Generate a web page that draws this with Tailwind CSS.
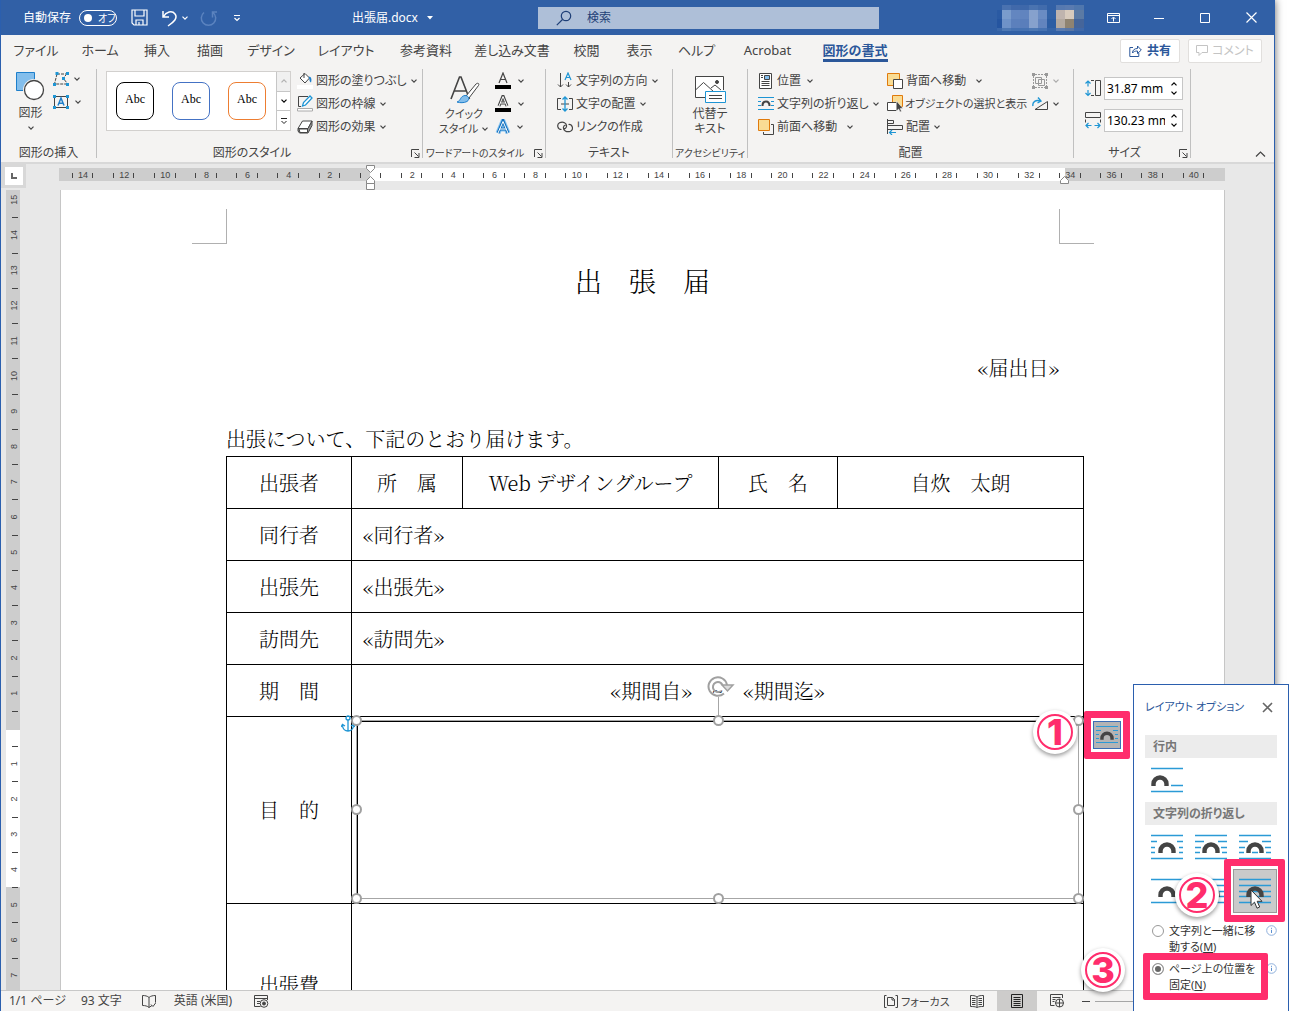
<!DOCTYPE html>
<html lang="ja">
<head>
<meta charset="utf-8">
<title>出張届.docx</title>
<script src="https://cdn.jsdelivr.net/npm/@tailwindcss/browser@4"></script>
</head>
<body class="relative h-screen overflow-hidden bg-white font-['Noto_Sans','Noto_Sans_CJK_JP',sans-serif] text-xs text-[#444] [font-feature-settings:'palt']">

<svg class="hidden">
  <symbol id="chev" viewBox="0 0 8 8"><path d="M1.5 2.7 4 5.2 6.5 2.7" fill="none" stroke="currentColor" stroke-width="1.2"/></symbol>
  <symbol id="launch" viewBox="0 0 9 9"><path d="M.5 8V.5H8M3.5 3.5l4 4M8 4v4.5H3.5" fill="none" stroke="currentColor"/></symbol>
  <symbol id="arch" viewBox="0 0 18 11"><path d="M2.5 11V9a6.5 6.5 0 0 1 13 0v2" fill="none" stroke="#444" stroke-width="4.4"/></symbol>
  <symbol id="info" viewBox="0 0 11 11"><circle cx="5.5" cy="5.5" r="4.8" fill="#fff" stroke="#8fb0dc"/><path d="M5.5 4.8V8M5.5 2.8v1" stroke="#5b8fd0"/></symbol>
</svg>

<div class="mr-[15px] flex h-full flex-col border-x border-[#2b5fae] bg-[#e8e8e8] shadow-[0_0_8px_rgba(0,0,0,0.6)]">

  <!-- Title bar -->
  <header class="flex h-[35px] shrink-0 items-center bg-[#3160a6] text-white">
    <div class="flex w-[350px] items-center pl-[22px]">
      <span class="w-[56px]">自動保存</span>
      <button class="flex h-4 w-[38px] items-center gap-[6px] rounded-full border border-white pl-[4px] text-[10px] leading-none whitespace-nowrap"><span class="size-2 shrink-0 rounded-full bg-white"></span>オフ</button>
      <button aria-label="保存" class="ml-[14px]"><svg width="17" height="17" viewBox="0 0 17 17" fill="none" stroke="#fff" stroke-width="1.2"><path d="M1 1h15v15H3l-2-2zM4 1v6h9V1M5 16v-5h7v5M8 16v-3"/></svg></button>
      <button aria-label="元に戻す" class="ml-[13px] flex items-center"><svg width="17" height="18" viewBox="0 0 17 18" fill="none" stroke="#fff" stroke-width="1.5"><path d="M2 2v6h6M2.500 7.500C5 3 11 1 14 5c3 4-1 8-7 12"/></svg><svg class="ml-[3px] size-2"><use href="#chev"/></svg></button>
      <button aria-label="やり直し" class="ml-[11px]"><svg width="17" height="18" viewBox="0 0 17 18" fill="none" stroke="#5b83bf" stroke-width="1.5"><path d="M4 3.500a7.200 7.200 0 1 0 9 0M12.500 8.500V3h4.500"/></svg></button>
      <button aria-label="カスタマイズ" class="ml-[16px]"><svg width="8" height="8" viewBox="0 0 8 8" fill="none" stroke="#fff" stroke-width="1.2"><path d="M1 1.500h6M1.500 4 4 6.500 6.500 4"/></svg></button>
    </div>
    <div class="flex w-[187px] items-center gap-[9px] pl-px"><span>出張届.docx</span><svg width="6" height="4"><path d="M0 0h6L3 3.500z" fill="#fff"/></svg></div>
    <label class="flex h-[22px] w-[341px] items-center bg-[#aebfd8] pl-[18px]">
      <svg width="17" height="16" viewBox="0 0 17 16" fill="none" stroke="#1f3f77" stroke-width="1.2"><circle cx="10" cy="6" r="4.700"/><path d="M6.500 9.500.8 15.200"/></svg>
      <input aria-label="検索" class="ml-[14px] w-[200px] bg-transparent text-xs outline-none placeholder:text-[#1f3f77]" placeholder="検索">
    </label>
    <div id="avatar" class="ml-auto grid h-[26px] grid-cols-[5px_repeat(8,9px)_10px] grid-rows-[5px_9px_9px_3px]"></div>
    <div class="ml-[23px] flex items-center pr-[17px]">
      <button aria-label="リボンの表示オプション"><svg width="13" height="10" viewBox="0 0 13 10" fill="none" stroke="#fff"><path d="M.5.500h12v9H.5zM.5 2.500h12M6.500 8.500V4.500M4.500 6l2-2 2 2"/></svg></button>
      <button aria-label="最小化" class="ml-[34px]"><svg width="11" height="10"><path d="M0 5.500h10" stroke="#fff"/></svg></button>
      <button aria-label="最大化" class="ml-[35px]"><svg width="11" height="10"><path d="M.5.500h9v9h-9z" fill="none" stroke="#fff"/></svg></button>
      <button aria-label="閉じる" class="ml-[35px]"><svg width="11" height="11"><path d="m.5.500 10 10m0-10-10 10" stroke="#fff" stroke-width="1.200"/></svg></button>
    </div>
  </header>

  <!-- Tabs -->
  <nav class="flex h-[31px] shrink-0 items-center bg-[#f4f3f2] pl-[3px] text-[13px]">
    <div class="grid grid-cols-[64px_64px_50px_56px_66px_84px_76px_96px_53px_53px_61px_81px_94px] text-center whitespace-nowrap">
      <a href="#">ファイル</a><a href="#">ホーム</a><a href="#">挿入</a><a href="#">描画</a><a href="#">デザイン</a><a href="#">レイアウト</a><a href="#">参考資料</a><a href="#">差し込み文書</a><a href="#">校閲</a><a href="#">表示</a><a href="#">ヘルプ</a><a href="#">Acrobat</a><a href="#" class="mx-auto w-[65px] shadow-[0_3px_0_#2b579a] font-bold text-[#2b579a]">図形の書式</a>
    </div>
    <div class="ml-auto flex gap-[8px] pr-[12px] text-xs">
      <button class="flex h-[24px] w-[60px] items-center justify-center gap-[5px] rounded-xs border border-[#e1dfdd] bg-white font-bold text-[#2b579a]"><svg width="13" height="12" viewBox="0 0 13 12" fill="none" stroke="#2b579a"><path d="M4 2.500H.8v9h9V8M3.500 8c0-3 2-4.500 5-4.500V1l3.800 4-3.800 3.500V6C6 6 4.500 6.500 3.500 8z"/></svg>共有</button>
      <button class="flex h-[24px] w-[74px] items-center justify-center gap-[4px] rounded-xs border border-[#e1dfdd] bg-white text-[#c4c4c4]"><svg width="12" height="12" viewBox="0 0 12 12" fill="none" stroke="#c4c4c4"><path d="M.5.500h11v7H6L3 10.500v-3H.5z"/></svg>コメント</button>
    </div>
  </nav>

  <!-- Ribbon -->
  <div class="flex h-[98px] shrink-0 border-b-2 border-[#d8d8d8] bg-[#f4f3f2] pt-[3px] pb-[4px] leading-4 whitespace-nowrap">
    <section class="flex w-[96px] flex-col border-r border-[#c0c0c0]">
      <div class="flex h-[76px] shrink-0 pl-[15px]">
        <button class="flex w-[29px] flex-col items-center justify-start"><svg class="mt-[3px] shrink-0" width="29" height="29" viewBox="0 0 29 29"><path d="M.5.500h18v18H.5z" fill="#83beec" stroke="#1e7fcb"/><circle cx="18" cy="18" r="11" fill="#f4f3f2"/><circle cx="18" cy="18" r="9.500" fill="#fff" stroke="#444" stroke-width="1.300"/></svg><span class="mt-[4px]">図形</span><svg class="mt-[3px] size-2"><use href="#chev"/></svg></button>
        <div class="ml-[8px] flex flex-col">
          <button aria-label="図形の編集" class="flex h-[20px] items-center gap-[3px]"><svg width="17" height="14" viewBox="0 0 17 14"><path d="M4 2h10M4 2 1.500 12H14M14 2l-4 4 4 5" fill="none" stroke="#444" stroke-dasharray="3 1"/><path d="M2.500 0h3v3h-3zM13 0h3v3h-3zM0 11h3v3H0zM13 11h3v3h-3zM9 5h3v3H9z" fill="#1e95d4"/></svg><svg class="size-2"><use href="#chev"/></svg></button>
          <button aria-label="テキスト ボックス" class="mt-[3px] flex h-[20px] items-center gap-[5px]"><svg width="16" height="14" viewBox="0 0 16 14"><path d="M1.500 1.500h13v11h-13z" fill="none" stroke="#444"/><path d="M0 0h3v3H0zM13 0h3v3h-3zM0 11h3v3H0zM13 11h3v3h-3z" fill="#1e95d4"/><path d="m5 10.500 3-7.500 3 7.500M6 8.300h4" fill="none" stroke="#1e7fcb" stroke-width="1.500"/></svg><svg class="size-2"><use href="#chev"/></svg></button>
        </div>
      </div>
      <div class="text-center">図形の挿入</div>
    </section>

    <section class="flex w-[326px] flex-col border-r border-[#c0c0c0]">
      <div class="flex h-[76px] shrink-0 pt-[2px] pl-[9px]">
        <div class="flex h-[60px] w-[185px] border border-[#d2d0ce] bg-white font-['Liberation_Serif',serif] text-xs text-black">
          <button class="mt-[10px] ml-[9px] h-[38px] w-[38px] rounded-lg border border-black pb-1">Abc</button>
          <button class="mt-[10px] ml-[18px] h-[38px] w-[38px] rounded-lg border border-[#4472c4] pb-1">Abc</button>
          <button class="mt-[10px] ml-[18px] h-[38px] w-[38px] rounded-lg border border-[#ed7d31] pb-1">Abc</button>
          <div class="ml-auto flex w-[14px] flex-col divide-y divide-[#c6c6c6] border-l border-[#c6c6c6]">
            <button aria-label="上へ" class="flex flex-1 items-center justify-center bg-[#f0f0f0] text-[#b0b0b0]"><svg class="size-2 rotate-180"><use href="#chev"/></svg></button>
            <button aria-label="下へ" class="flex flex-1 items-center justify-center"><svg class="size-2"><use href="#chev"/></svg></button>
            <button aria-label="その他" class="flex flex-1 items-center justify-center"><svg width="8" height="8" fill="none" stroke="#222"><path d="M1 1.500h6M1.500 4 4 6.500 6.500 4"/></svg></button>
          </div>
        </div>
        <div class="ml-[6px] -mt-[2px] flex flex-col">
          <button class="flex h-[23px] items-center gap-[3px]"><svg width="16" height="17" viewBox="0 0 16 17"><path d="M0 13h16v4H0z" fill="#fff"/><path d="m3 6 5-4.500L12.500 6 8 11zM7 1v5" fill="#fff" stroke="#444"/><path d="M11.500 4.500c3 0 3.500 3 2.500 6-2-1-1-3-2.500-6" fill="#1e7fcb"/></svg>図形の塗りつぶし<svg class="size-2"><use href="#chev"/></svg></button>
          <button class="flex h-[23px] items-center gap-[3px]"><svg width="16" height="17" viewBox="0 0 16 17"><path d="M11 1.500H1.500v10H4" fill="none" stroke="#444"/><path d="m5.500 11 1-3.500L13 1l2 2-6.500 7z" fill="#fff" stroke="#1e95d4" stroke-width="1.300"/><path d="M.5 13.500h15v2.500H.5z" fill="#fff" stroke="#aaa"/></svg>図形の枠線<svg class="size-2"><use href="#chev"/></svg></button>
          <button class="flex h-[23px] items-center gap-[3px]"><svg width="16" height="14" viewBox="0 0 16 14"><path d="M5.500 1h9.500l-4 7.500H1z" fill="#fff" stroke="#444"/><path d="M1 8.500h10L15 1v4.500L11 13H2.500L1 11z" fill="#999" stroke="#444"/><path d="M2 9h8.500v3.500H3z" fill="#fff" stroke="#444"/></svg>図形の効果<svg class="size-2"><use href="#chev"/></svg></button>
        </div>
      </div>
      <div class="flex items-center"><span class="flex-1 pr-[4px] text-center">図形のスタイル</span><button aria-label="詳細" class="mr-[2px]"><svg class="size-[9px]"><use href="#launch"/></svg></button></div>
    </section>

    <section class="flex w-[123px] flex-col border-r border-[#c0c0c0]">
      <div class="flex h-[76px] shrink-0 pl-[17px]">
        <button class="flex w-[48px] flex-col items-center justify-start leading-[15px]"><svg class="mt-[5px] shrink-0" width="31" height="30" viewBox="0 0 31 30"><path d="m2 25 8.500-22H12l8.500 22M5 17h12" fill="none" stroke="#444" stroke-width="1.600"/><path d="m17 22 10-12c2-1.500 3.500-.5 2.500 1.500L20 24z" fill="#fff" stroke="#444"/><path d="M8 28c4-1 3-6 8-6.500 4 0 5 4 2 6-3 1.500-7 1.500-10 .5" fill="#83beec" stroke="#1e7fcb"/></svg><span class="mt-[2px] text-[11px]">クイック</span><span class="flex items-center gap-[3px] text-[11px]">スタイル<svg class="size-2"><use href="#chev"/></svg></span></button>
        <div class="ml-[7px] flex flex-col">
          <button aria-label="文字の塗りつぶし" class="flex h-[23px] items-center gap-[6px]"><svg width="16" height="17" viewBox="0 0 16 17"><path d="m4 11 4-10 4 10M5.300 7.500h5.400" fill="none" stroke="#444" stroke-width="1.200"/><path d="M0 13h16v4H0z" fill="#000"/></svg><svg class="size-2"><use href="#chev"/></svg></button>
          <button aria-label="文字の輪郭" class="flex h-[23px] items-center gap-[6px]"><svg width="16" height="17" viewBox="0 0 16 17"><path d="m4 11 4-10 4 10M5.300 8h5.400" fill="none" stroke="#444" stroke-width="3"/><path d="m4 11 4-9.500 4 9.500M5.300 8h5.400" fill="none" stroke="#fff"/><path d="M0 13h16v4H0z" fill="#000"/></svg><svg class="size-2"><use href="#chev"/></svg></button>
          <button aria-label="文字の効果" class="flex h-[23px] items-center gap-[5px]"><svg width="16" height="16" viewBox="0 0 16 16"><path d="M3 14 8 2l5 12M4.500 10h7" fill="none" stroke="#8cc6f0" stroke-width="5"/><path d="M3 14 8 2l5 12M4.500 10h7" fill="none" stroke="#1472c0" stroke-width="3"/><path d="M3 14 8 2.500 13 14M4.500 10h7" fill="none" stroke="#fff"/></svg><svg class="size-2"><use href="#chev"/></svg></button>
        </div>
      </div>
      <div class="flex items-center"><span class="flex-1 pl-[3px] text-[10px]">ワードアートのスタイル</span><button aria-label="詳細" class="mr-[2px]"><svg class="size-[9px]"><use href="#launch"/></svg></button></div>
    </section>

    <section class="flex w-[127px] flex-col border-r border-[#c0c0c0]">
      <div class="flex h-[76px] shrink-0 flex-col items-start pl-[11px]">
        <button class="flex h-[23px] items-center gap-[3px]"><svg width="16" height="17" viewBox="0 0 16 17" fill="none" stroke="#444"><path d="M3.500 1v14M1 12.500 3.500 15 6 12.500M11.500 10v5M9 12.500l2.500 2.500 2.500-2.500"/><path d="m8 8 3-7 3 7M9 5.500h4" stroke="#1e95d4" stroke-width="1.200"/></svg>文字列の方向<svg class="size-2"><use href="#chev"/></svg></button>
        <button class="flex h-[23px] items-center gap-[3px]"><svg width="16" height="16" viewBox="0 0 16 16" fill="none" stroke="#444"><path d="M4 2.500H.5v11H4M12 2.500h3.500v11H12M4 8h8"/><path d="M8 1v14M5.500 3.500 8 1l2.500 2.500M5.500 12.500 8 15l2.500-2.500" stroke="#1e95d4" stroke-width="1.300"/></svg>文字の配置<svg class="size-2"><use href="#chev"/></svg></button>
        <button class="flex h-[23px] items-center gap-[3px]"><svg width="16" height="12" viewBox="0 0 16 12" fill="none" stroke="#444" stroke-width="1.200"><path d="M4.500 8.500C.5 8.500-.5 3.500 2.500 1.800 6 0 10 2 9.500 5.500 9.200 7 8 8 6.500 7.500M11.500 3.500c4-.5 5.500 5 2 6.700-4 1.500-7.500-1-7-4 .2-1.200 1-2 2.200-2.200"/></svg>リンクの作成</button>
      </div>
      <div class="text-center">テキスト</div>
    </section>

    <section class="flex w-[75px] flex-col border-r border-[#c0c0c0]">
      <button class="flex h-[76px] shrink-0 flex-col items-center justify-start leading-[15px]"><svg class="mt-[7px] shrink-0" width="31" height="28" viewBox="0 0 31 28" fill="none" stroke="#444"><path d="M28.500 14V.500H.5v21h10" fill="#fff"/><path d="m.5 14 8-7.500 10 9M16 12l4-3 6 5"/><circle cx="22" cy="6" r="1.500" fill="#444"/><path d="M10.500 15.500h20v11h-20z" fill="#fff" stroke="#1e95d4"/><path d="M14 19.500h13M14 22.500h13"/></svg><span class="mt-[2px]">代替テ</span><span>キスト</span></button>
      <div class="text-center text-[10px]">アクセシビリティ</div>
    </section>

    <section class="flex w-[326px] flex-col border-r border-[#c0c0c0]">
      <div class="flex h-[76px] shrink-0 pl-[10px]">
        <div class="flex w-[128px] flex-col items-start">
          <button class="flex h-[23px] items-center gap-[3px]"><svg width="16" height="16" viewBox="0 0 16 16" fill="#fff" stroke="#444"><path d="M1.500.500h12v15h-12z"/><path d="M3.500 8.500h8M3.500 10.500h8M3.500 12.500h8M3 2.500h2M3 4.500h2"/><path d="M6.500 2.500h5v4h-5z" fill="#83beec"/></svg>位置<svg class="ml-[2px] size-2"><use href="#chev"/></svg></button>
          <button class="flex h-[23px] items-center gap-[3px]"><svg width="16" height="13" viewBox="0 0 16 13" fill="none" stroke="#1e95d4"><path d="M0 .500h16M0 12.500h16M0 4.500h3M0 8.500h3M13 4.500h3M13 8.500h3"/><path d="M4.500 9c0-6 7-6 7 0" stroke="#444" stroke-width="2"/></svg>文字列の折り返し<svg class="size-2"><use href="#chev"/></svg></button>
          <button class="flex h-[23px] items-center gap-[3px]"><svg width="16" height="16" viewBox="0 0 16 16"><path d="M13 5.500h2.500v10h-10V13" fill="none" stroke="#444"/><path d="M.5.500h11v11H.5z" fill="#f9dc94" stroke="#e07a0c"/></svg>前面へ移動<svg class="ml-[6px] size-2"><use href="#chev"/></svg></button>
        </div>
        <div class="flex w-[146px] flex-col items-start pl-px">
          <button class="flex h-[23px] items-center gap-[3px]"><svg width="16" height="16" viewBox="0 0 16 16"><path d="M.5.500h12v12H.5z" fill="#f9dc94" stroke="#e07a0c"/><path d="M6.500 6.500h9v9h-9z" fill="#fff" stroke="#444"/></svg>背面へ移動<svg class="ml-[6px] size-2"><use href="#chev"/></svg></button>
          <button class="flex h-[23px] items-center gap-[2px] text-[11px]"><svg width="16" height="17" viewBox="0 0 16 17"><path d="M5.500.500h10v11h-10z" fill="#f9dc94" stroke="#e07a0c"/><path d="M.5 7.500h9v8h-9z" fill="#fff" stroke="#444"/><path d="M9.500 6v10l2.200-2 1.300 3 1.500-.7-1.300-2.800h2.800z" fill="#444" stroke="#fff" stroke-width=".5"/></svg>オブジェクトの選択と表示</button>
          <button class="flex h-[23px] items-center gap-[3px]"><svg width="16" height="16" viewBox="0 0 16 16" fill="none" stroke="#444"><path d="M.5 0v15M.5 1.500h6v3h-6M.5 6.500h15v4H.5z"/><path d="M9 13.500H2.500M5 11l-2.500 2.500L5 16" stroke="#1e95d4" stroke-width="1.200"/></svg>配置<svg class="size-2"><use href="#chev"/></svg></button>
        </div>
        <div class="flex flex-col">
          <button aria-label="グループ化" class="flex h-[23px] items-center gap-[4px] text-[#aaa]"><svg width="16" height="16" viewBox="0 0 16 16" fill="none" stroke="#999"><path d="M3 1.500h10M3 14.500h10M1.500 3v10M14.500 3v10" stroke-dasharray="2 1"/><path d="M3.500 4.500h6v6h-6zM6.500 6.500h6v6h-6z"/><path d="M0 0h3v3H0zM13 0h3v3h-3zM0 13h3v3H0zM13 13h3v3h-3z" fill="#999" stroke="none"/></svg><svg class="size-2"><use href="#chev"/></svg></button>
          <button aria-label="回転" class="flex h-[23px] items-center gap-[4px]"><svg width="16" height="14" viewBox="0 0 16 14" fill="none" stroke="#444"><path d="M15.500 4.500v8H3z"/><path d="M1 9c-1-4 3-6.500 7-5M6 .500 9 4 5.500 6" stroke="#1e95d4" stroke-width="1.400"/></svg><svg class="size-2"><use href="#chev"/></svg></button>
        </div>
      </div>
      <div class="text-center">配置</div>
    </section>

    <section class="flex w-[117px] flex-col border-r border-[#c0c0c0]">
      <div class="flex h-[76px] shrink-0 flex-col gap-[9px] pt-[8px] pl-[11px] text-black">
        <label class="flex h-[23px] items-center gap-[3px]"><svg width="16" height="17" viewBox="0 0 16 17" fill="none" stroke="#444"><path d="M10.500.500h5v15h-5zM6 .500h3M6 15.500h3"/><path d="M3 1v5.500M.5 3.500 3 1l2.500 2.500M3 10v5.500M.5 13 3 15.500 5.500 13" stroke="#1e95d4" stroke-width="1.200"/></svg>
          <span class="flex h-[23px] w-[79px] border border-[#c6c6c6] bg-white"><input aria-label="高さ" value="31.87 mm" class="w-[60px] pl-[2px] text-xs outline-none"><span class="flex w-[17px] flex-col items-center justify-center gap-px"><svg class="size-2 rotate-180"><use href="#chev"/></svg><svg class="size-2"><use href="#chev"/></svg></span></span></label>
        <label class="flex h-[23px] items-center gap-[3px]"><svg width="16" height="17" viewBox="0 0 16 17" fill="none" stroke="#444"><path d="M.5.500h15v5H.5zM.5 7.500v3M15.500 7.500v3"/><path d="M1 13.500h5.500M3.500 11 1 13.500 3.500 16M9.500 13.500H15M12.500 11l2.500 2.500-2.500 2.500" stroke="#1e95d4" stroke-width="1.200"/></svg>
          <span class="flex h-[23px] w-[79px] border border-[#c6c6c6] bg-white"><input aria-label="幅" value="130.23 mm" class="w-[60px] pl-[2px] text-xs outline-none"><span class="flex w-[17px] flex-col items-center justify-center gap-px"><svg class="size-2 rotate-180"><use href="#chev"/></svg><svg class="size-2"><use href="#chev"/></svg></span></span></label>
      </div>
      <div class="flex items-center"><span class="flex-1 pr-[4px] text-center">サイズ</span><button aria-label="詳細" class="mr-[2px]"><svg class="size-[9px]"><use href="#launch"/></svg></button></div>
    </section>
    <button aria-label="リボンを折りたたむ" class="mr-[8px] ml-auto self-end"><svg width="11" height="8"><path d="m1 6.500 4.500-4.500L10 6.500" fill="none" stroke="#444" stroke-width="1.200"/></svg></button>
  </div>

  <!-- Horizontal ruler -->
  <div class="flex h-[26px] shrink-0">
    <button aria-label="左揃えタブ" class="flex h-[24px] w-[25px] items-center justify-center bg-[#d8d8d8]"><span class="flex size-[18px] items-center justify-center bg-white"><svg width="6" height="6"><path d="M1 0v5h5" fill="none" stroke="#666" stroke-width="2"/></svg></span></button>
    <svg id="hruler" class="ml-[33px] h-[26px] w-[1166px] font-['Liberation_Sans'] text-[9px]"></svg>
  </div>

  <!-- Workspace -->
  <main class="flex min-h-0 flex-1 overflow-hidden">
    <svg id="vruler" class="ml-[5px] h-[801px] w-[14px] shrink-0 font-['Liberation_Sans'] text-[9px]"></svg>
    <article class="relative mr-[49px] ml-[40px] flex-1 border-x border-[#c6c6c6] bg-white pr-[165px] pl-[165px] font-['Noto_Serif_CJK_JP','Liberation_Serif','Noto_Sans_CJK_JP',serif] text-xl font-light text-black [font-feature-settings:normal]">
      <div class="absolute top-[19px] left-[131px] h-[35px] w-[35px] border-r border-b border-[#b0b0b0]"></div>
      <div class="absolute top-[19px] right-[130px] h-[35px] w-[35px] border-b border-l border-[#b0b0b0]"></div>
      <h1 class="pt-[64px] text-center text-[27px] leading-[54px] font-light">出　張　届</h1>
      <p class="mt-[40px] text-right leading-10">«届出日»</p>
      <p class="mt-[36px] leading-[30px]">出張について、下記のとおり届けます。</p>
      <div class="relative mt-[2px] -mr-[25px]">
        <table class="w-full table-fixed border-collapse text-center [&_td]:border [&_td]:border-black [&_th]:border [&_th]:border-black [&_th]:font-light">
          <colgroup><col class="w-[125px]"><col class="w-[111px]"><col class="w-[256px]"><col class="w-[119px]"><col></colgroup>
          <tbody>
            <tr class="h-[52px]"><th>出張者</th><th>所　属</th><td>Web デザイングループ</td><th>氏　名</th><td>自炊　太朗</td></tr>
            <tr class="h-[52px]"><th>同行者</th><td colspan="4" class="pl-[11px] text-left">«同行者»</td></tr>
            <tr class="h-[52px]"><th>出張先</th><td colspan="4" class="pl-[11px] text-left">«出張先»</td></tr>
            <tr class="h-[52px]"><th>訪問先</th><td colspan="4" class="pl-[11px] text-left">«訪問先»</td></tr>
            <tr class="h-[52px]"><th>期　間</th><td colspan="4">«期間自»　~　«期間迄»</td></tr>
            <tr class="h-[187px]"><th>目　的</th><td colspan="4"></td></tr>
            <tr class="h-[162px]"><th>出張費</th><td colspan="4"></td></tr>
          </tbody>
        </table>
        <!-- Selected text box -->
        <div class="absolute top-[264px] right-[5px] left-[130px] h-[179px] border border-[#a6a6a6] bg-white">
          <div class="h-full border-t border-l border-black"></div>
          <svg class="absolute -top-[6px] -left-[16px]" width="14" height="18" viewBox="0 0 14 18" fill="none" stroke="#1e95d4" stroke-width="1.300"><circle cx="7" cy="3" r="2"/><path d="M7 5v11M1.500 10c0 8 11 8 11 0M0 12l1.500-2.500L4 11M14 12l-1.500-2.500L10 11"/></svg>
          <div class="absolute -top-[24px] left-1/2 h-[20px] w-px bg-[#a6a6a6]"></div>
          <svg class="absolute -top-[46px] left-1/2 -ml-[11px]" width="28" height="24" viewBox="0 0 28 24" fill="none" stroke="#a0a0a0" stroke-width="2"><path d="M20 10A9.300 9.300 0 1 0 17 18.500"/><path d="M15.500 10a5 5 0 1 0-1.500 6"/><path d="M15 10H26l-5.500 6z" fill="#ddd" stroke-width="1.500"/></svg>
          <span class="absolute -top-[6px] -left-[6px] size-[11px] rounded-full border-2 border-[#a0a0a0] bg-white"></span>
          <span class="absolute -top-[6px] left-1/2 -ml-[5px] size-[11px] rounded-full border-2 border-[#a0a0a0] bg-white"></span>
          <span class="absolute -top-[6px] -right-[6px] size-[11px] rounded-full border-2 border-[#a0a0a0] bg-white"></span>
          <span class="absolute top-1/2 -left-[6px] -mt-[6px] size-[11px] rounded-full border-2 border-[#a0a0a0] bg-white"></span>
          <span class="absolute top-1/2 -right-[6px] -mt-[6px] size-[11px] rounded-full border-2 border-[#a0a0a0] bg-white"></span>
          <span class="absolute -bottom-[6px] -left-[6px] size-[11px] rounded-full border-2 border-[#a0a0a0] bg-white"></span>
          <span class="absolute -bottom-[6px] left-1/2 -ml-[5px] size-[11px] rounded-full border-2 border-[#a0a0a0] bg-white"></span>
          <span class="absolute -right-[6px] -bottom-[6px] size-[11px] rounded-full border-2 border-[#a0a0a0] bg-white"></span>
        </div>
      </div>
    </article>
  </main>

  <!-- Status bar -->
  <footer class="flex h-[21px] shrink-0 items-center border-t border-[#c8c8c8] bg-[#f4f3f2] leading-none">
    <span class="w-[71px] pl-[8px]">1/1 ページ</span>
    <span class="ml-[9px]">93 文字</span>
    <svg class="ml-[20px]" width="14" height="13" viewBox="0 0 14 13" fill="none" stroke="#444"><path d="M7 2.500C5.500 1 3 .5.500.5v10c2.500 0 5 .5 6.500 2V2.500C8.500 1 11 .5 13.500.5v7M7 12.500l3-2M9 9.500l2 2 3-4"/></svg>
    <span class="ml-[18px]">英語 (米国)</span>
    <svg class="ml-[22px]" width="15" height="13" viewBox="0 0 15 13" fill="none" stroke="#444"><path d="M13.500 5V.500H.5v11h6M.5 3.500h13M3 6.500h3M3 8.500h3"/><circle cx="10" cy="8.500" r="3.800"/><circle cx="10" cy="8.500" r="1.500" fill="#444"/></svg>
    <div class="ml-auto flex h-full w-[390px] items-center">
      <button class="flex w-[86px] items-center gap-[3px] text-[11px]"><svg width="14" height="13" viewBox="0 0 14 13" fill="none" stroke="#444"><path d="M2.500.500H.5v12h2M11.500.500h2v12h-2M3.500 2.500h5l2 2v6h-7zM8 2.500v2.500h2.500"/></svg>フォーカス</button>
      <button aria-label="閲覧モード"><svg width="14" height="13" viewBox="0 0 14 13" fill="none" stroke="#444"><path d="M7 2C5 .5 3 .5.500.5v11c2.500 0 4.500 0 6.500 1 2-1 4-1 6.500-1V.500C11 .5 9 .5 7 2zM7 2v10M2 3.500h3.500M2 5.500h3.500M2 7.500h3.500M2 9.500h3.500M8.500 3.500H12M8.500 5.500H12M8.500 7.500H12M8.500 9.500H12"/></svg></button>
      <button aria-label="印刷レイアウト" class="ml-[13px] flex h-full w-[40px] items-center justify-center bg-[#cdcccb]"><svg width="12" height="14" viewBox="0 0 12 14" fill="none" stroke="#222"><path d="M.5.500h11v13H.5zM2.500 3.500h7M2.500 5.500h7M2.500 7.500h7M2.500 9.500h7M2.500 11.500h7"/></svg></button>
      <button aria-label="Web レイアウト" class="ml-[13px]"><svg width="14" height="14" viewBox="0 0 14 14" fill="none" stroke="#444"><path d="M12.500 4V.500H.5v11h4M2.500 3.500h8M2.500 5.500h3M2.500 7.500h2"/><circle cx="9.500" cy="9" r="4"/><path d="M5.500 9h8M9.500 5v8"/></svg></button>
      <button aria-label="縮小" class="ml-[18px] h-px w-[8px] bg-[#444]"></button>
      <span class="mr-[20px] ml-[5px] h-px flex-1 bg-[#a6a6a6]"></span>
    </div>
  </footer>
</div>

<!-- Layout options flyout -->
<aside class="absolute top-[684px] right-px bottom-0 w-[156px] border border-b-0 border-[#2b5fae] bg-white px-[11px] whitespace-nowrap">
  <div class="flex h-[50px] items-center justify-between pr-[4px] pb-[6px] text-[#2b579a]"><h2 class="text-[11px]">レイアウト オプション</h2><button aria-label="閉じる"><svg width="11" height="11"><path d="m1 1 9 9m0-9-9 9" stroke="#666" stroke-width="1.600"/></svg></button></div>
  <h3 class="h-[23px] bg-[#ececec] pl-[8px] leading-[23px] font-bold text-[#777]">行内</h3>
  <button aria-label="行内" class="flex size-[44px] items-center justify-center"><svg width="32" height="26" viewBox="0 0 32 26"><path d="M0 1.500h32M20 18.500h12M0 24.500h32" stroke="#2b9ad6" stroke-width="1.500"/><use href="#arch" x="0" y="8" width="18" height="11"/></svg></button>
  <h3 class="h-[23px] bg-[#ececec] pl-[8px] leading-[23px] font-bold text-[#777]">文字列の折り返し</h3>
  <div class="grid grid-cols-3 [&>button]:flex [&>button]:size-[44px] [&>button]:items-center [&>button]:justify-center">
    <button aria-label="四角形"><svg width="32" height="26" viewBox="0 0 32 26"><path d="M0 1.500h32M0 7.500h6M26 7.500h6M0 13.500h4M28 13.500h4M0 18.500h4M28 18.500h4M0 24.500h32" stroke="#2b9ad6" stroke-width="1.500"/><use href="#arch" x="7" y="8" width="18" height="11"/></svg></button>
    <button aria-label="狭く"><svg width="32" height="26" viewBox="0 0 32 26"><path d="M0 1.500h32M0 7.500h9M23 7.500h9M0 13.500h6M26 13.500h6M0 18.500h5M27 18.500h5M0 24.500h32" stroke="#2b9ad6" stroke-width="1.500"/><use href="#arch" x="7" y="8" width="18" height="11"/></svg></button>
    <button aria-label="内部"><svg width="32" height="26" viewBox="0 0 32 26"><path d="M0 1.500h32M0 7.500h9M23 7.500h9M0 13.500h6M26 13.500h6M0 18.500h5M13 18.500h6M27 18.500h5M0 24.500h32" stroke="#2b9ad6" stroke-width="1.500"/><use href="#arch" x="7" y="8" width="18" height="11"/></svg></button>
    <button aria-label="上下"><svg width="32" height="26" viewBox="0 0 32 26"><path d="M0 1.500h32M0 24.500h32" stroke="#2b9ad6" stroke-width="1.500"/><use href="#arch" x="7" y="8" width="18" height="11"/></svg></button>
    <button aria-label="背面"><svg width="32" height="26" viewBox="0 0 32 26"><path d="M0 1.500h32M0 7.500h32M0 13.500h32M0 18.500h32M0 24.500h32" stroke="#2b9ad6" stroke-width="1.500"/><use href="#arch" x="7" y="8" width="18" height="11"/></svg></button>
    <button aria-label="前面" class="border border-[#999] bg-[#cacaca]"><svg width="32" height="26" viewBox="0 0 32 26"><path d="M0 1.500h32M0 7.500h32M0 13.500h32M0 18.500h32M0 24.500h32" stroke="#2b9ad6" stroke-width="1.500"/><use href="#arch" x="7" y="8" width="18" height="11"/></svg></button>
  </div>
  <div class="flex flex-col gap-[6px] pt-[10px] pl-[7px] text-[11px] leading-4 text-[#333]">
    <label class="flex gap-[5px]"><input type="radio" name="anchor" class="mt-[2px] size-[12px] shrink-0 appearance-none rounded-full border border-[#999] bg-white"><span class="w-[92px]">文字列と一緒に移<br>動する(<u>M</u>)</span><svg class="mt-[2px] size-[11px] shrink-0"><use href="#info"/></svg></label>
    <label class="flex gap-[5px]"><input type="radio" name="anchor" checked class="mt-[2px] size-[12px] shrink-0 appearance-none rounded-full border border-[#999] bg-white checked:bg-[#666] checked:shadow-[inset_0_0_0_2px_#fff]"><span class="w-[92px]">ページ上の位置を<br>固定(<u>N</u>)</span><svg class="mt-[2px] size-[11px] shrink-0"><use href="#info"/></svg></label>
  </div>
</aside>

<!-- Layout options button and numbered callouts -->
<div class="absolute top-[711px] right-[160px] flex h-[48px] w-[46px] items-center justify-center rounded-xs border-[7px] border-[#ff2d6c] bg-white">
  <button aria-label="レイアウト オプション" class="flex size-[28px] shrink-0 items-center justify-center border border-[#3a6cb5] bg-[#b4b4b4]"><svg width="22" height="18" viewBox="0 0 22 18"><path d="M0 .500h22M0 4.500h5M17 4.500h5M0 8.500h3M19 8.500h3M0 12.500h3M19 12.500h3M0 16.500h22" stroke="#2b9ad6"/><use href="#arch" x="4" y="5" width="14" height="9"/></svg></button>
</div>
<div class="absolute top-[859px] right-[5px] h-[63px] w-[61px] rounded-xs border-[7px] border-[#ff2d6c]"></div>
<div class="absolute top-[953px] right-[22px] h-[47px] w-[125px] rounded-xs border-[7px] border-[#ff2d6c]"></div>
<div class="absolute top-[710px] right-[213px] flex size-[44px] items-center justify-center rounded-full bg-white shadow-[0_2px_4px_rgba(0,0,0,0.4)]"><span class="flex size-[36px] items-center justify-center rounded-full border-2 border-[#ff2d6c] font-['Inter',sans-serif] text-[36px] leading-none font-extrabold text-[#ff2d6c]">1</span></div>
<div class="absolute top-[873px] right-[71px] flex size-[44px] items-center justify-center rounded-full bg-white shadow-[0_2px_4px_rgba(0,0,0,0.4)]"><span class="flex size-[36px] items-center justify-center rounded-full border-2 border-[#ff2d6c] font-['Inter',sans-serif] text-[36px] leading-none font-extrabold text-[#ff2d6c]">2</span></div>
<div class="absolute top-[948px] right-[165px] flex size-[44px] items-center justify-center rounded-full bg-white shadow-[0_2px_4px_rgba(0,0,0,0.4)]"><span class="flex size-[36px] items-center justify-center rounded-full border-2 border-[#ff2d6c] font-['Inter',sans-serif] text-[36px] leading-none font-extrabold text-[#ff2d6c]">3</span></div>
<svg class="absolute top-[889px] right-[27px]" width="13" height="21" viewBox="0 0 13 21"><path d="M1 1v15.500l3.500-3.300 2.500 6 2.700-1.200-2.500-5.700H12z" fill="#fff" stroke="#333"/></svg>

<script>
  // Rulers: numbers on whole units, ticks halfway between them
  const text = (x, y, n, extra = '') => `<text x="${x}" y="${y}" text-anchor="middle" fill="#444" ${extra}>${n}</text>`;
  let h = '<path d="M0 4h1166v13H0z" fill="#cdcdcd"/><path d="M311 4h695v13H311z" fill="#fff"/>';
  for (let n = -14; n <= 40; n += 2) if (n) h += text(312 + n * 20.57, 14, Math.abs(n));
  for (let n = -14.5; n <= 41; n++) h += `<path d="M${Math.round(311 + n * 20.57) + 0.5} 9v5" stroke="#444"/>`;
  h += '<path d="M307.500 1.500h8v3l-4 4-4-4zM311.500 12.500l4 4v3h-8v-3zM307.500 19.500h8v6h-8zM1005.500 12.500l4 4v3h-8v-3z" fill="#fff" stroke="#888"/>';
  document.getElementById('hruler').innerHTML = h;

  let v = '<path d="M0 0h14v801H0z" fill="#cdcdcd"/><path d="M0 540h14v157H0z" fill="#fff"/>';
  for (let n = -15; n <= 7; n++) {
    const y = 538.6 + n * 35.25;
    if (n) v += text(0, 0, Math.abs(n), `transform="translate(11 ${y}) rotate(-90)"`);
    v += `<path d="M6 ${Math.round(y + 17.6) + 0.5}h6" stroke="#444"/>`;
  }
  document.getElementById('vruler').innerHTML = v;

  // Pixelated account block
  const cells = [
    '#3160a6','#4a72b0','#4169aa','#3e68aa','#4a73b0','#426cac','#3160a6','#5679b0','#5a7bb0','#5077ad',
    '#2a5aa3','#7a9ccc','#6386c0','#6184bf','#86a1cd','#6a8cc3','#3262a6','#bfb4ae','#d8cbbd','#5b7aa4',
    '#2555a0','#6e92c8','#5c80bc','#5a7ebb','#86a1cd','#6284be','#2c5da3','#b3a9a0','#8f8371','#45659a',
    '#3b68aa','#4d78b4','#4672b2','#4672b2','#4d78b4','#4672b2','#3564a8','#5a7bb0','#5a76a4','#4068a8'];
  document.getElementById('avatar').innerHTML = cells.map(c => `<i style="background:${c}"></i>`).join('');
</script>
</body>
</html>
